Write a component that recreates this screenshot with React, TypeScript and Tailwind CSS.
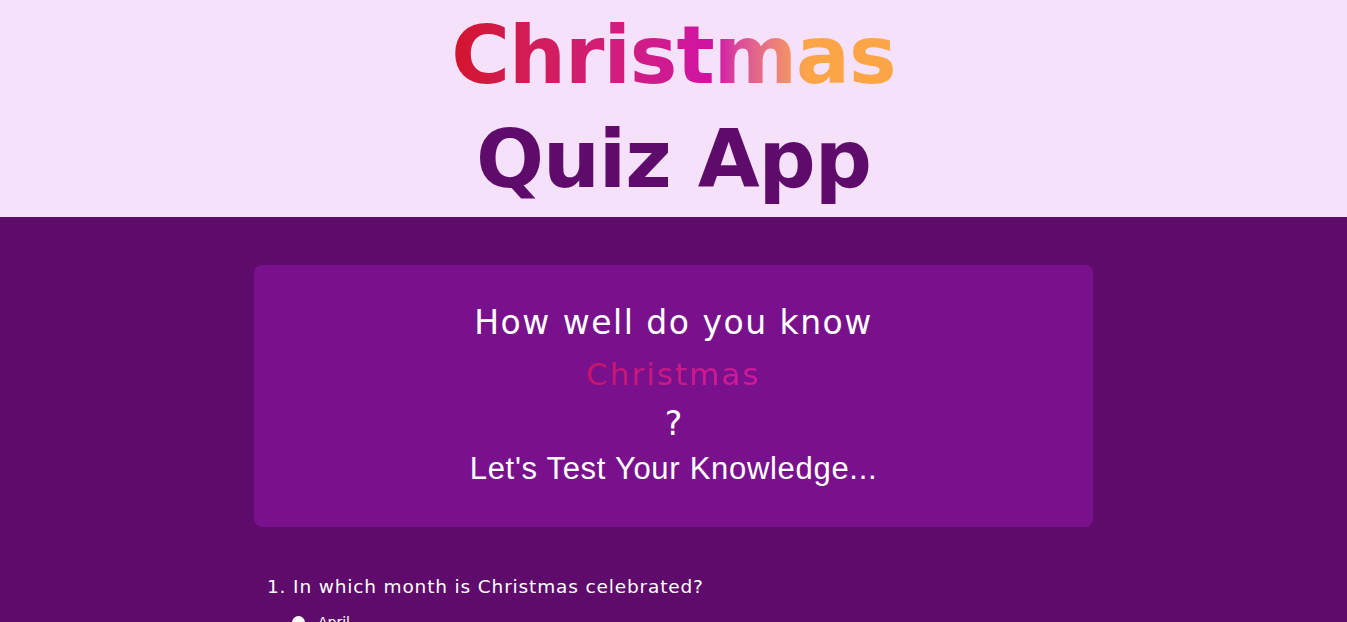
export default function App() {
  const heading = { fontFamily: '"DejaVu Sans", "Noto Sans", sans-serif' };

  return (
    <div className="min-h-screen bg-[#5e0b6b]" style={heading}>
      <header className="bg-[#f5e1f9] h-[217px] flex flex-col items-center pt-[4px]">
        <h1 className="text-[80px] font-bold leading-[104px] tracking-[-1px] bg-gradient-to-r from-[#d3132a] via-[#d011a6] via-60% to-[#fba547] to-80% bg-clip-text text-transparent">
          Christmas
        </h1>
        <h1 className="text-[80px] font-bold leading-[104px] tracking-[-1px] text-[#5e0b6b]">
          Quiz App
        </h1>
      </header>

      <main className="flex flex-col items-center pt-[48px]">
        <section className="w-[839px] h-[262px] rounded-lg bg-[#79118d] flex flex-col items-center pt-[32px] text-white">
          <h2 className="text-[33px] font-normal leading-[52px] tracking-[1.5px]">How well do you know</h2>
          <span className="text-[31px] leading-[50px] tracking-[2px] bg-gradient-to-r from-[#c8156a] to-[#d2189f] bg-clip-text text-transparent">
            Christmas
          </span>
          <span className="text-[33px] font-normal leading-[50px]">?</span>
          <p
            className="text-[31px] leading-[40px] tracking-[0.7px]"
            style={{ fontFamily: '"Liberation Sans", Arial, sans-serif' }}
          >
            Let's Test Your Knowledge...
          </p>
        </section>

        <div className="w-[839px] pt-[48px] pl-[13px] text-white">
          <p className="text-[18.5px] leading-[24px] tracking-[0.85px]">1. In which month is Christmas celebrated?</p>
          <label className="flex items-center gap-[13px] pl-[25px] mt-[13px] text-[14px]">
            <span className="w-[13px] h-[13px] rounded-full bg-white" />
            April
          </label>
        </div>
      </main>
    </div>
  );
}
